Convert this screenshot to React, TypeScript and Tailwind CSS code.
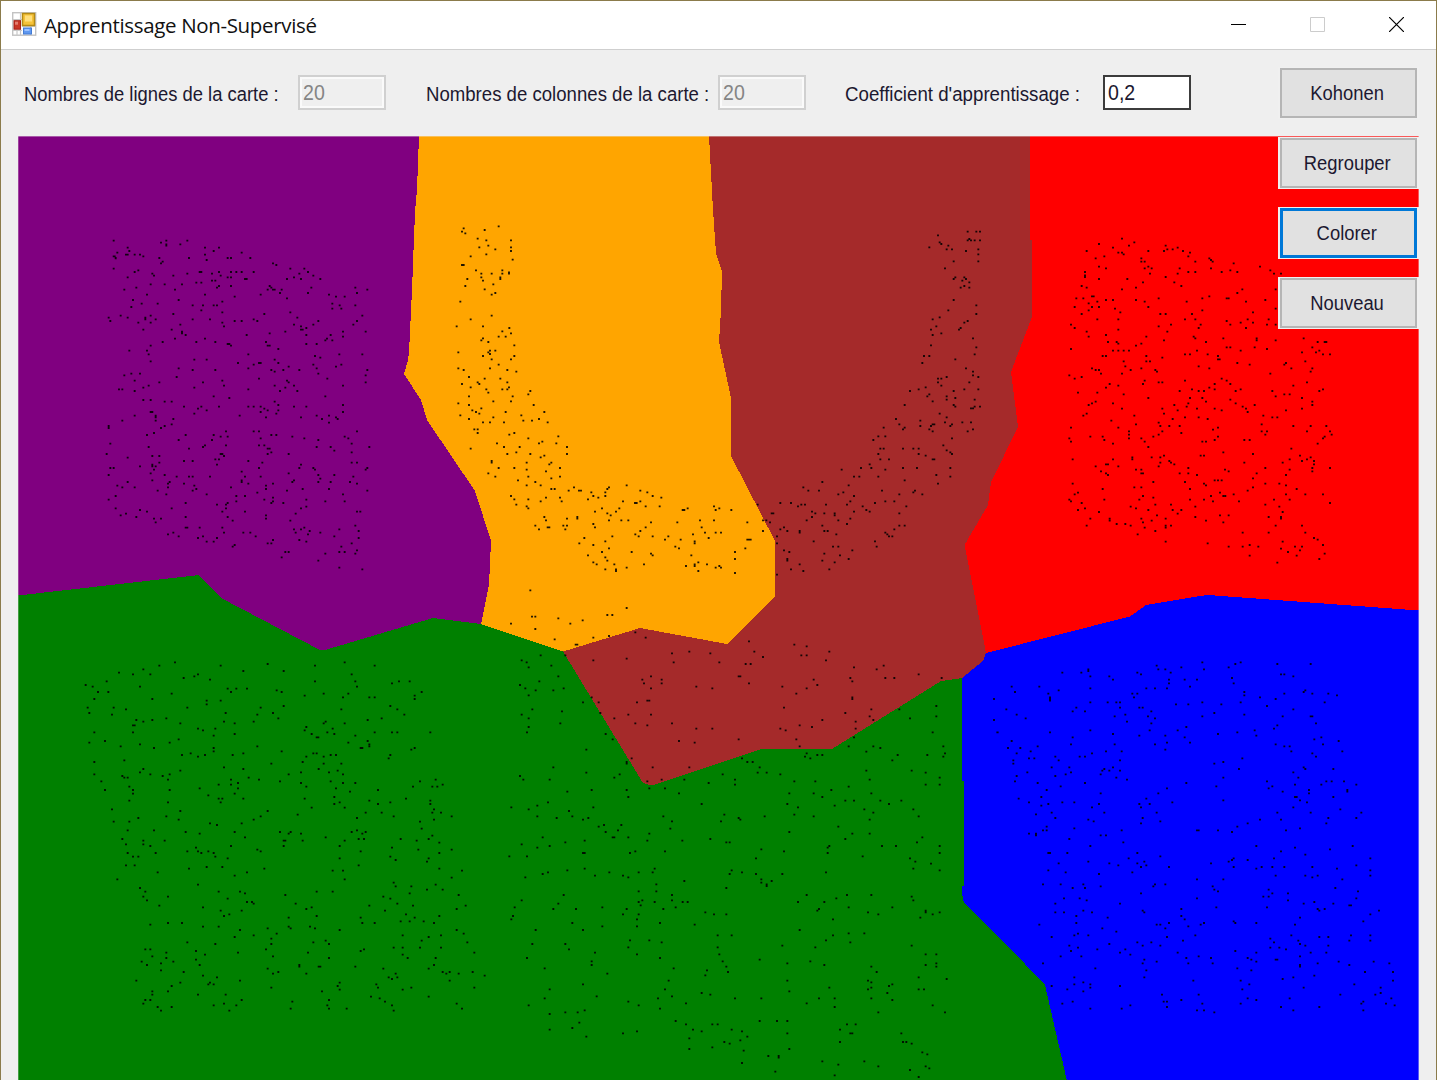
import React from "react";

type Cluster = { x: number; y: number; rows: string };

// Sample points, grouped per area. Each row is "y:x x x", in thirds of a pixel from the area's origin.
const clusters: Cluster[] = [
  {
    x: 80,
    y: 220,
    rows:
      "62:101 259 322;68:243;73:259 301;77:259;83:143 375 417;93:148 401;98:112 485;104:138 143 164 180 375;109:101 190;114:107 238 327 443 453 511;120:380;125:248;130:243 579;135:589;146:101 631 673;151:175;156:164 359 364 417 453 469 485 521 684;161:217 322 396 658;167:222 280 422 700;172:143 443 453 642;177:495 500 621 663 721;182:396 406;188:349 364;193:212 254 306;198:417 453 569;203:169 411 574 694 826;209:133 285 563 579 584 605 862;219:600 684 831;224:201 375 542 747;230:464 768 794;235:621;240:159 296;245:427;251:185 233 757;256:338 369 401 411 779 826;261:154;266:757 784;271:364;277:427 631;282:280 553;287:122 212 847;293:86 143 196 652;298:196 227 338 390 521;303:91 464 485 532 715 831;308:175 212 427;314:301 642 700 820;319:432 663;324:679;329:190 275 663 668;335:306 616 789 857;340:306 569;345:317 500 679 752;350:789;356:285 375 741;361:736 757;366:248 349 406 558;372:443 448 679 710;377:212 453 563 569;387:595;392:148 201;403:206 505 778 847;408:705;413:721;419:343 380 584;424:212;429:474 537 542 595;434:521 700 784;440:626 768;445:296 505 710;450:338 406 574 610 658 862;455:584;461:154 180 715;466:133 857;471:290;476:537 742;482:164 427 621;487:238 369 626 857;497:206 432 584 642 789;503:190 343 616;508:117 127 505;513:164 600 652;529:401 736;534:448;540:190 212;545:254 275 584;555:595 789;560:312 364 417 505 521 542 642 679;566:354 553;571:380 563 595;576:212 217 542 789;581:343 589;587:164 227 479 710 747;592:227 558 663 768;597:280 726 773;602:127 227;608:747;613:275;618:86 254;624:86 243;634:438 521 537 831;639:222;645:201 317 401 574 589;650:422 443 637 794;655:542 673 805;660:296 396 715;671:91 815;676:375 438 537 553;681:206 369 710 752 868;686:327 563 569;692:763;697:574 815;702:80 422 427 563 626;708:217 238 432;713:143;718:406 417;723:312 338 505;728:238 547 815 831;734:217 411 663;739:180 217 227;744:91 101 537 658 700 862;749:222 705 857;755:485;760:212 626;765:86 254 715 763;770:290 327 338 390 495 542 820;776:721;781:217 485 642;786:143 269 485 637 715 752 810;791:264 312 505 579 831;797:112 343 558;802:127 164 264 453;807:349 558 668 747;812:233 338 621 862;818:532;823:259 380 789;828:107 469 495;833:579;839:86 553 679;844:469 579 736 794;849:317 443 574 610;854:411 438;860:679;865:107 275 438 663;870:180;875:201 427 495 831 841;881:138 647;886:122 558;891:169 317 443;896:222 243 558;902:458 631;907:227;917:826;923:317 322 359 427 673;928:642 663 778;933:689 836;938:280 432 490 511 647 721;943:264 684;949:296 369 527 763;954:354 411 836;960:579 658;965:380 401 679;970:563 574 815;975:464;980:458 784;991:831;996:616 626 778 794;1001:736 826;1012:605;1022:715;1043:778;1048:847;293:86;109:104;115:107",
  },
  {
    x: 400,
    y: 210,
    rows:
      "49:296;55:191;60:254;65:186;70:196;86:233;91:259 333;107:265;112:238 333;118:286;123:333;133:259;139:212;149:338;165:186 191;181:228 307;187:327;191:244 275 307 327;202:244 301;207:202 301;212:249;223:280;228:196;238:254;249:286;254:275;275:181;317:275;328:212;349:170 249;354:328;364:307;370:333;380:296 317;385:249;391:244;396:265;406:343;422:270 286;427:175 265;432:270;438:249 343;448:275 333;464:296;475:175 270;480:191 322;485:349;501:207;506:254 301;517:233 322;522:186 238;532:212 327;538:259 307 322;543:391;548:265;553:385;559:207 338;574:280 333;580:175;585:207 401;595:244;601:217;606:228 317 433;611:238;616:181 364;622:280;627:207 417;632:370 396;637:249 270 312 443;658:223 233;669:233 343;674:328;679:475;685:385;695:427;700:291 417 469;711:312 359 501;716:212;727:349;732:322 391 501;737:433;742:422;753:275;758:275 380 454;763:448;774:296 343 480;779:380;784:438;790:265;800:286 385 480;805:454;811:354;816:406;826:380 422 680;832:522 627;837:454 464 622;842:506 537 543 721;847:574 616 742;858:333 580 616 758;863:438 480 595 784;868:343 385 564;874:422 485 669 721;879:705 710;884:349;889:380 737 779 942;895:385 606 658 863 958;900:848 853 947 994;905:585 648;910:622;916:632;921:433 532;926:501 532;931:438 627 664 685 900 942;937:753 832 1042;942:580;947:406 490 501;952:443 448 585 737 905;958:417 496;963:721;968:915 947 963;973:706 879;979:637 716 758 805;984:553 926;989:795 842 1042 1047 1052;994:616 884;1000:538 884;1005:580;1010:826;1015:627 837 1036;1026:606 695 1005;1031:753;1036:564 758 874;1042:616;1047:1005;1052:622;1057:580 895;1063:590 643 732 884 921;1068:858 884 958;1073:680 947 963;1078:616 648;1083:648 895;1089:1005;1141:391;1194:680;1215:622 637;1220:396 406;1225:475;1231:548;1241:333 511;1257:406;1278:627;1283:580;1288:464;1304:527 532",
  },
  {
    x: 720,
    y: 210,
    rows:
      "65:743 769 780;76:654;87:748;91:743 753 764 780;97:659;102:664;107:685;112:628;118:680 696 775;123:738;133:775;154:701 775;175:675;202:706 733;207:701 738;212:727;217:748;228:733;233:722 748;270:701;286:769;301:685;312:769;322:659;328:638;333:743;338:733;349:649;354:722;359:633 717;370:664;375:638;385:759;406:633;412:769;433:764;438:612 628;448:706;459:607;475:738;485:759;496:759;501:680 775;506:654 664;517:654 748;527:664;532:617;538:596 733 775;543:570 701;553:628;559:622 680;564:706;569:680 764;574:638;585:554 701;590:706 764 780;595:753 759;611:659;622:680;627:528;632:601;637:675 727 753;643:538 638 643 696;648:601 633 691;653:491 554;658:549 628 759;664:638 743;679:475 496;685:696;690:460;706:670;716:481 491 549 580 596;721:680;727:691;732:475 596 696;737:617;748:481 507 638 643;763:449;774:423 454 549 591 691;779:365 496;795:649;800:402 418 475 691;811:554;816:307;821:654;826:386;832:250;842:265 297 486 585;847:370 580;853:355 538 607;858:402;874:391 496 523;879:181 213 465;884:113 244 255 318 381;889:234 428 559;900:439;905:276 402 449;910:155 160 286 313 344 538;916:344;921:276;926:391;931:129 139 260 355;937:150;942:381;947:307 538 554;952:192;958:181 523;963:129 202 239 313 323;968:239 496;973:349 502;979:171 507 517;994:281 465;1000:171;1010:339 355 470;1021:192 397;1026:208;1031:313;1036:360;1047:202 386;1052:202 307;1057:344;1063:239;1078:213 328;1083:250;1094:171",
  },
  {
    x: 1040,
    y: 220,
    rows:
      "56:246;67:283;72:177;77:267 377;83:219 413;88:382 398;93:140 325 372 429;98:235 246 450;103:251;109:193 445;115:167 304 508;120:513;125:304 314 466 518;130:581;140:177 325 660;145:198 314 335 419 513;151:571 691;156:135 445 466 545 592;161:330 413 702 723;166:135;171:135 377;177:177 262;187:309 403;198:125 424;203:140 288;208:246 607 707;219:592;229:156 161 508;235:109 130 356 487 560 566;240:198 219 288 676;245:172 314 440 618;250:146;261:104 156 177 325;266:225 707;271:146 487;277:241 639;282:125 361 377 456;298:172 235 435 466 623 686;303:560;308:602 639;314:93 393 482 571 681 707;319:356;324:104 476 618;329:235;335:140 382;345:198;350:146 319 461;355:466 550 650 791;361:372 650 707;366:204 230 498 833 854 859;371:235 304;377:288;382:560 571 644 817;387:93 681;392:219 235 251 267 471 602 838;397:786 828;403:435 450 503 849 870;408:188 198 319 534;413:367;418:534 539;424:251 319 330 796;429:592 738;434:629 733;439:256 476;445:156 304 508 754 817;450:167 177 272 346;455:351 812;461:183 246 691;466:88;471:125;476:104 545;482:314 435 560;487:356 367 801;492:209 309 524 571;497:235 760;503:198 508;508:456 524 602 849;513:419 476 492 587 697 838;518:114 172;523:251 733 749;529:707;534:325 450 487 786;539:571;545:167 498 817;550:156 219 445 587;555:146 403 644 817;560:440 608;566:246 367 471 524 618 786;571:413 545 738;576:623;581:140 372;587:130 283 670;592:435 476 697 712;597:398 503;602:214;608:356;613:288 665;618:361 388 419 760 812 859;623:93 235 534;629:519;634:267 367 665 681 801 870;639:424;644:267 356 676 875;650:151 188 340 534 854;655:88 267 304 849;660:193 524 613 629;665:93 314 487 498;671:219 833;681:325;686:754;697:550;702:639;707:372 482 492 780;712:277 335 361 812;718:98 219 277 749 801;723:388 786 822;728:361 393 613 728;733:198 204 403 822;739:167 235 356;744:445 676 817 870;749:288 304 555 749;754:183 566 817;760:198 304 309 419 445 650;765:204 471 738;775:639;781:524 534 545;786:340 435;791:98 492 676 718;796:498 738;802:283 304 639;807:188 450 770;812:623;818:114 540;823:104 581 738 796 849;828:309 513 550 556;833:340;839:88 193 298 450 492 702 749;844:93 519 597;849:125 870;854:346 393 676;860:272 466 718;865:135 288;870:114 325 398 424;876:177 728;881:413;886:351 540 566;891:466 686 723;896:151 209 304 377 723;902:209 335 498;907:309 550;912:230 256;917:140 272 377 393 707 786;923:314 377;933:346;938:608 686 796;943:293;954:822;959:833;965:377 728;970:503;975:629 849;980:566 608 655 765 786;986:723;991:780;996:744;1001:854;1007:629 770;1017:838;1028:712",
  },
  {
    x: 0,
    y: 570,
    rows:
      "277:525 1034;282:803;287:478 662 945 1124;298:430;303:730 851;308:357;313:399 451 594 1055;319:583;324:551;329:630;334:320 945 1066 1197 1229;340:1176;345:257;350:278 420 1071;356:683 709 741;361:830;366:294 325 693 845 1265;371:515 971 1045;377:914 1244;382:1029 1108 1124;387:283 457 1244;392:620 662;403:620;408:851 1171;413:263 341 562 782;418:378 1024 1192;429:268 677 819;434:336 772 1213;445:499 835 1145;450:409 457 1103;455:430 672 761 977;460:541 704 971 1034;466:399 404;471:919;476:594 646 998;481:609 914;487:283 399 982 1124 1176 1192 1291;492:704 935 1003;497:641 1066;502:950 955;508:536;513:315 1103;518:268 509 1045;523:420 1108;529:362 772 1108;534:462 641 1082 1087 1244;539:1234;544:641 845;550:572 730 940 950;555:546 615 698 992 1008 1171;560:594 919 971;565:1166;571:373;576:283 908;581:814 971 1024;592:672;597:430 730 956;602:541 1013;607:420 903 987;613:283 451 509 866 1029;618:367 488;623:373 383 746;629:504 693 777 1307;634:304 840 992 1260;639:714 903 1029 1066;644:656 693 1328;650:388 919 1239 1297 1312;655:599 714 1008;660:315 399 509 1134;665:1050;671:399 704;676:625;681:1003;686:656 667 730 914 1218;692:388 1108 1291;697:504 662 1019 1171;702:1003 1134 1291;713:935 1034;718:336 1302;723:541 803;728:1097 1145 1297 1323;734:893;739:499 782 1181 1355;744:415 1071;749:536 761 1302;755:341 388 1260;760:630 725;765:651;776:1265;781:383 462 1071;786:557 704 840 872 1055 1097;791:599 866 903 1087;797:1297;802:735 977;807:367 1076 1092 1202 1286;812:430 494 851 856 908 1034 1250;818:1318;823:378 430;828:451 693 851 1019;833:588 1176;839:772 1255 1355;844:562 594 625 782 1082;849:383 467 604 641 1318;860:399 415 646 1171;865:683 1019 1286;870:1187;875:1281;886:378 404 1076;891:620 667;896:567 793 1318;902:998 1029 1386;907:473 741;917:704;923:1355;928:352 1034;938:1181;944:594 1307;949:1187 1234;954:420;959:1281 1328;965:436 656 720 950 998;970:735 1229;975:856 1376;980:430 504 1150;986:683 1171;991:441;996:741 756;1001:761 887 1192;1007:478 1108 1239 1397;1012:609 935;1017:919 1370;1022:662 725 1155;1033:688 1218;1038:672 950 1318;1043:866 1082 1244;1054:1202 1229 1271;1059:504 546 1087 1124 1302;1064:451;1070:609 656 866 930;1075:803 872 945;1080:720 1019 1370;1091:830 1391;1096:761 1208 1323;1101:704 1286;1106:814;1112:977 1265;1117:562 940 1402;1122:646 814 987;1133:1181 1208 1260 1323;1138:436 451 798 1092;1143:588 1082;1148:499 714 924 1423;1154:615 1208;1159:457 819;1164:499 987 1223 1307;1169:588;1175:425 520;1180:483;1185:441 599 898 1302;1190:898 956 961 1066;1196:803 1150 1286;1201:483;1206:551 835 1328 1349 1418;1211:819 919 1187 1339 1376;1217:609 1454;1222:651 1166 1192;1227:1176;1232:409 720 1349;1238:541 630 1019;1243:625 641 1129;1248:515 1013;1253:814 1134 1234 1423;1259:1019 1208;1264:457 504 966;1274:457 594 677;1280:1113 1286;1285:1139;1290:436 451 725 987;1295:877 1155;1301:430 672 1370;1306:641 709 982 1176;1311:473 515;1316:872 987 1040 1386;1322:483 688 1181",
  },
  {
    x: 480,
    y: 600,
    rows:
      "97:466;113:497;124:807;134:943;139:980;155:628 823 1048;160:576 691;166:182 256 964 980;171:849;181:125 340 1038;176:440;187:140 581 718;192:797 812;197:214 1211;202:146 1122;208:1190;223:1316;229:235 513 776 781;234:1111 1216 1243 1385;239:487 545 1001;244:178 1117;250:492 545 807;255:120 1012;260:649 907;265:136 251 513 697 980;271:167 220;281:949;286:146;292:335 1117;297:1117 1542;302:502 508;307:309 356 471;318:1369;323:912;328:157 1174 1258;334:246;339:361 1096;344:125 445 513;349:1169 1369;355:146 403 1290;360:1027 1180 1542;365:1127;370:241 466 576;376:502 959;381:146 996;386:649 697 901 1127;391:917;397:141 1358 1553;402:377;412:1122;418:398 776 949;423:597;428:644;439:959 1106 1180 1390;444:1201;449:319;455:1159;460:980 1395;465:1012 1027 1253 1342;470:975 1390;475:455 786 991;481:1237;486:440 802 818;491:440;502:220 518 628 839;512:1159 1295;518:319 833 860 1337;523:419 728 901;528:120;533:403 1379;539:130 209 545 613 765 1169;544:502 943 1006;549:686;554:765 1337 1379;560:1106;565:508 555;570:335 440 1054;575:262;580:597 928 1001 1174;591:445 1027;602:1096 1122 1201 1264;607:204;612:665 922 1227;617:172 1064;622:94 340 954;628:146 1153 1300;633:267;638:1180;644:733 943;649:172 277 550 854 1001 1316;654:230 325 776;659:309 781 1169;664:576 723;675:372 424;680:356 1075;686:571;691:414;696:377 928;701:508 1169 1117;712:188 398 403 445 1327;717:691 1096;722:314 502 607;727:256 739 749 1311;733:125;738:209 1048 1206 1248 1379;743:172 1043;748:844;754:466 555 912;759:309 314 450 1043 1379;769:88 141 1148;775:828 1290;785:1306;791:1353;806:314 524 1300;811:262 755 1379;817:204 388 476 518 786 1038;822:188 749 828 907;827:345 429;832:136 445;838:844;843:613 875;848:844;853:529 860;858:860;864:739;874:476 529;885:251 576 980 1101 1174;890:1295;895:1069;901:125 487 576 1300;906:476 524 608 623 954 1033;911:235;916:482;922:104 367 587 1106 1237;927:220 288 440 550 1017;932:1012 1337;937:676 1164 1337 1379;943:429 476 702 739 1195 1358;948:99;953:1321;958:94 471 1059;969:277 540;974:644;979:367 471;990:167 309 959;1000:1106 1153;1006:713 755 1059;1021:450 508 1038;1027:545 1111;1032:157 256;1037:907 1295;1042:445 713 1006;1048:267;1058:345;1063:471 718 1337 1369;1074:141 540;1079:839;1084:335 728 991;1090:922 1369;1095:335 1033 1337;1100:739 1174 1369;1105:194 581;1111:681;1116:744 1190;1121:382;1126:676;1132:1316;1137:1400;1142:566 922 1164;1147:1174;1153:309 1237;1158:1227;1163:1048 1174;1168:209 555 1164 1316 1332;1174:928;1179:665 1222;1184:691;1189:350 576;1195:194 534 765 844 1017 1064 1174;1200:1237;1205:445;1210:618 980;1216:146 476 1358;1221:1064;1226:540;1231:314;1237:256 293 1195 1395;1242:209;1263:587 839 891 922;1268:298;1273:618 697 713 1101 1127;1284:277;1289:209 639 755 1080;1294:471 665 786;1300:429 922 1111 1117 1264;1310:319 802;1315:628;1321:781;1326:733 1080 1269 1279;1331:749 1295;1342:697;1347:628 928;1352:791;1357:1327;1363:1342;1368:865 896;1373:896;1384:1027 1153;1389:786;1394:1075;1399:1195 1337;1405:1348;1410:1290;1415:886;1426:1064;1431:1316",
  },
  {
    x: 950,
    y: 580,
    rows:
      "247:757 872;252:856 982 1082;257:620;262:694 836;268:415 625 646 762;273:415;278:337 394 562 662;283:573 993 1003;289:421 478 1030;294:846;299:489 657 704 741;310:657 851;320:185 268 720;325:421 589 615 651;331:326 1066;336:195 883 1061;341:295 547 562 1003 1087 1135;346:883 1161;352:300 552 930;357:132 300 977;362:300;367:421 473 499 510 757 872 1124;373:678 715 814;378:951;383:379 510 568 578;388:169 1030;394:368 405 604;399:793;404:200 526 883;409:494 594 757 998 1082 1087;415:227 615;420:132;425:531;430:604 1098;436:982;441:709;446:972;451:421 599 683 914;457:142 300 862;462:489 804;467:568 646 919;472:368 704 1114;478:1093;483:185 1166;488:651 720;493:363 494 615 977 1119;499:263 1003 1019;504:174 211;509:646;514:242 468 515 1024 1177;520:200 426 1087;530:316 389 405 1098;535:237 253 877;541:190 326 510;546:820;551:190 793;562:305 358 489 1061;567:463 867 1066 1150;572:457 478 510;577:232 363 1030;583:347 452;588:200 316;593:499 820 1045;599:531;604:195 951 1129 1145 1182;609:263 405 709;614:1035 1114 1219;619:332 799 967;625:651 956;630:290 1077 1192;635:998 1192;640:452 625 1077;651:274 1035 1040 1150;656:206 589;661:820 1050;667:237 337 373 667 1071;672:295 447 568 599;677:274;682:426 573 1030;688:1171;698:305 463 620 982 1082 1234;703:258;714:316 578 1135 1219;719:415 930 993;724:431 631;730:573 893 1129;740:290 862;745:373 1050;751:279 290 515 741 746 804 1008;756:846;761:237 258;766:258 452 468;777:358;787:520;798:421 919 1208;803:1035;808:1140;814:993;819:295 300 352 562;824:1066;829:631;835:536 851 972 1261;840:846 893;845:415 583 836;850:326 478 562 783;856:505 589 1219;861:573 657 851 935 967 1003 1087;866:919 1161;871:295 1261;877:347 547;882:447;887:977 1066 1103 1261;892:1087;898:741 820 1177;913:279 332 400 615 646;919:452 610 788;924:368 405 1156;929:793 956;934:804 1224;940:573 967 1014;950:940 956;955:342 389 741 1219;961:410 1014;966:1093;971:316 510 1061 1150;976:1198 1203;982:799 951;987:694 1103 1124;992:400 578 1108 1287;997:316 342 426 583;1003:1261;1008:379 694;1013:473 1050;1018:704;1024:851 1240;1029:379 657 762 856 919;1034:268 620 631 752 1035;1039:715;1045:457 646;1055:499;1061:384;1066:373 415 736 1024 1203 1261;1071:305 651 1108 1135;1076:961;1082:699 1045 1198 1261;1087:562 604 972;1092:478 1050;1097:358 578 631 1066 1135;1103:384 961 988;1108:442 526 1008;1113:363 856;1118:510 683 919 1082 1129;1124:541;1129:332 394 746 1050;1134:709 783 893;1139:583 904 977 982;1145:620 919 1166 1271;1150:279 578 715 788 1103 1318;1155:1050 1198;1160:1050;1165:436 862;1171:589 904;1176:1245 1329;1187:1093;1192:373 583 1030;1197:998;1202:730 872 1329;1207:400;1213:373 421 898 1213;1218:305 510;1223:421 1061 1292;1228:352 877;1234:400;1239:1292;1244:636 746 1171 1276;1255:893 1019 1324;1260:694 919;1265:368 641 651 1240;1271:337 757 872 1234 1308;1276:541 1334;1281:651 993 1108;1286:421 515;1291:741 762 1030 1240;1297:793",
  },
];

const dotPath = clusters
  .map((c) =>
    c.rows
      .split(";")
      .map((row) => {
        const [y, xs] = row.split(":");
        return xs
          .split(" ")
          .map((x) => `M${(c.x + Number(x) / 3 - 0.95).toFixed(2)} ${(c.y + Number(y) / 3 - 0.95).toFixed(2)}h1.9v1.9h-1.9z`)
          .join("");
      })
      .join(""),
  )
  .join("");

function ClusterMap() {
  return (
    <svg className="block h-[944px] w-[1401px]" viewBox="18 136 1401 944">
      <g shapeRendering="crispEdges">
        <path fill="#008000" d="M18 590H1100V1081H18z" />
        <path fill="#800080" d="M18 136H419L417 190 415 212 412 290 409 352 408 360 404 374 421 400 427 420 475 491 491 541 489 585 481 624 433 618 325 650H320L221 598 199 575 18 595.5z" />
        <path fill="#008000" d="M18 595.5L199 575 221 598 18 600z" />
        <path fill="#ffa500" d="M419 136H709L713 210 716 253 722 271 721 310 719 342 731 398V456L775 541V596L727 644 640 628 563 651.5 481 624 489 585 491 541 475 491 427 420 421 400 404 374 408 360 409 352 412 290 415 212 417 190z" />
        <path fill="#a52a2a" d="M709 136H1030V240H1031.5V318L1011 372 1018 427 991 482 988 505 964.5 545 986 653 983 661 962 678 941 681 832 749H762L652 785.5 643 783 563 651.5 640 628 727 644 775 596V541L731 456V398L719 342 721 310 722 271 716 253 713 210z" />
        <path fill="#ff0000" d="M1030 136H1419V610.5L1208 595 1146 605 1130 616.5 986 653 964.5 545 988 505 991 482 1018 427 1011 372 1031.5 318V240H1030z" />
        <path fill="#0000ff" d="M986 653L1130 616.5 1146 605 1200 596 1208 595 1419 610.5V1081H1067L1045 985 1025 964 964 903 962 893V886H963.5V780.5H962V678L983 661z" />
      </g>
      <path fill="#000" fillOpacity="0.88" d={dotPath} />
      <path d="M18 136.25H1419" stroke="#efefef" strokeWidth="0.5" />
      <path d="M18.2 136V1080" stroke="#efefef" strokeWidth="0.4" />
      <path d="M1418.75 136V1080" stroke="#efefef" strokeWidth="0.5" />
    </svg>
  );
}

function AppIcon() {
  return (
    <svg className="h-6 w-[25px]" viewBox="0 0 25 24">
      <rect x="0.7" y="0.7" width="23" height="22.5" fill="#fff" stroke="#c3c3c3" strokeWidth="1.4" />
      <path d="M8.5 1v22M1 7.5h9M1 18.5h9M5 18v5M18.5 14v9M10 14.5h14" stroke="#c8c8c8" strokeWidth="1.2" />
      <rect x="10.5" y="1.5" width="12" height="12" fill="#f6c33a" stroke="#b58a14" strokeWidth="1.5" />
      <rect x="13" y="3.5" width="7" height="6" fill="#ffdf7c" />
      <rect x="2" y="8.7" width="6.5" height="8.5" fill="#c93526" stroke="#a11d14" />
      <rect x="3" y="9.7" width="3" height="3" fill="#e37c6e" />
      <rect x="11.5" y="16" width="8" height="6" fill="#5f98f0" stroke="#437bd3" />
      <rect x="12.5" y="17" width="5" height="2" fill="#9cc2ff" />
    </svg>
  );
}

function Field({ label, value, enabled, labelClass, textClass }: { label: string; value: string; enabled?: boolean; labelClass: string; textClass: string }) {
  return (
    <label className="flex h-[35px] shrink-0 items-start">
      <span className={`mt-[5px] shrink-0 whitespace-nowrap text-[20px] leading-7 ${labelClass}`}>
        <span className={`inline-block origin-left ${textClass}`}>{label}</span>
      </span>
      <span
        className={
          enabled
            ? "h-[35px] w-[88px] shrink-0 border-2 border-[#3c3c3c] bg-white pl-[3px] text-[22px] leading-[31px]"
            : "h-[35px] w-[88px] shrink-0 border-2 border-[#d0d0d0] bg-[#efefef] pl-[3px] text-[22px] leading-[31px] text-[#858585] shadow-[inset_0_0_0_2px_#fafafa]"
        }
      >
        <span className="inline-block origin-left scale-x-[0.89]">{value}</span>
      </span>
    </label>
  );
}

function Button({ children, focused }: { children: string; focused?: boolean }) {
  return (
    <div className="h-[52px] w-[141px] bg-[#f0f0f0] pl-0.5 pt-px">
      <button
        className={`flex h-[50px] w-[137px] items-center justify-center bg-[#e1e1e1] pr-[3px] text-[20px] leading-none ${
          focused ? "border-[3px] border-[#0078d7]" : "border-2 border-[#b5b5b5]"
        }`}
      >
        <span className="inline-block scale-x-[0.92]">{children}</span>
      </button>
    </div>
  );
}

export default function App() {
  return (
    <div className="flex h-[1080px] w-[1437px] flex-col overflow-hidden border-x border-t border-[#8b7b4b] bg-[#efefef] font-['Liberation_Sans',sans-serif] text-[#1c1830]">
      <header className="flex h-[49px] shrink-0 items-center border-b border-[#cfcfcf] bg-white pb-0.5 pl-[11px]">
        <AppIcon />
        <h1 className="ml-[7px] mt-0.5 grow font-['Open_Sans',sans-serif] text-[20.5px] tracking-[-0.34px] text-[#111]">Apprentissage Non-Supervisé</h1>
        <div className="flex items-center gap-16 pr-8">
          <svg className="size-[15px]" viewBox="0 0 15 15"><path d="M0 7.5h15" stroke="#000" /></svg>
          <svg className="size-[15px]" viewBox="0 0 15 15"><path d="M.5.5h14v14H.5z" fill="none" stroke="#ccc" /></svg>
          <svg className="size-[15px]" viewBox="0 0 15 15"><path d="M0 0l15 15M15 0L0 15" stroke="#000" strokeWidth="1.2" /></svg>
        </div>
      </header>
      <div className="flex h-[86px] shrink-0 items-start pl-[23px] pr-[17px] pt-[17px]">
        <div className="flex grow pt-2">
          <Field label="Nombres de lignes de la carte :" value="20" labelClass="w-[274px]" textClass="scale-x-[0.92]" />
          <div className="ml-10"><Field label="Nombres de colonnes de la carte :" value="20" labelClass="w-[292px]" textClass="scale-x-[0.93]" /></div>
          <div className="ml-[39px]"><Field label="Coefficient d'apprentissage :" value="0,2" enabled labelClass="w-[258px]" textClass="scale-x-[0.935]" /></div>
        </div>
        <Button>Kohonen</Button>
      </div>
      <main className="relative ml-[17px] w-[1401px] shrink-0">
        <ClusterMap />
        <div className="absolute right-0 top-px flex flex-col gap-[18px]">
          <Button>Regrouper</Button>
          <Button focused>Colorer</Button>
          <Button>Nouveau</Button>
        </div>
      </main>
    </div>
  );
}
